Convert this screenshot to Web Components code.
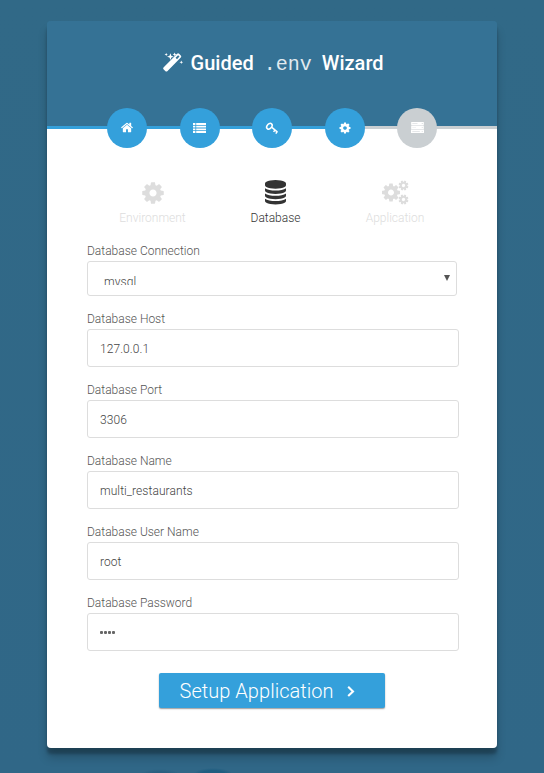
<!DOCTYPE html>
<html lang="en"><head><meta charset="utf-8"><title>Guided .env Wizard</title>
<style>
html,body{margin:0;height:773px;overflow:hidden}
body{font-family:Roboto,"Liberation Sans",sans-serif;font-weight:300;color:#555}
</style></head><body>
<wizard-page>
 <wizard-header slot="header"></wizard-header>
 <wizard-progress slot="header"></wizard-progress>
 <wizard-tabs>
  <wizard-tab icon="cog" style="width:67px">Environment</wizard-tab>
  <wizard-tab icon="database" active style="width:50px">Database</wizard-tab>
  <wizard-tab icon="cogs" style="width:60px">Application</wizard-tab>
 </wizard-tabs>
 <form-field label="Database Connection" select>mysql</form-field>
 <form-field label="Database Host">127.0.0.1</form-field>
 <form-field label="Database Port">3306</form-field>
 <form-field label="Database Name">multi_restaurants</form-field>
 <form-field label="Database User Name">root</form-field>
 <form-field label="Database Password" password></form-field>
 <wizard-button>Setup Application</wizard-button>
</wizard-page>
<script>
const COG='M1024 640q0-106-75-181t-181-75-181 75-75 181 75 181 181 75 181-75 75-181zm512-109v222q0 12-8 23t-20 13l-185 28q-19 54-39 91 35 50 107 138 10 12 10 25t-9 23q-27 37-99 108t-94 71q-12 0-26-9l-138-108q-44 23-91 38-16 136-29 186-7 28-36 28h-222q-14 0-24.5-8.5t-11.5-21.5l-28-184q-49-16-90-37l-141 107q-10 9-25 9-14 0-25-11-126-114-165-168-7-10-7-23 0-12 8-23 15-21 51-66.5t54-70.5q-27-50-41-99l-183-27q-13-2-21-12.5t-8-23.5v-222q0-12 8-23t19-13l186-28q14-46 39-92-40-57-107-138-10-12-10-24 0-10 9-23 26-36 98.5-107.5t94.5-71.5q13 0 26 10l138 107q44-23 91-38 16-136 29-186 7-28 36-28h222q14 0 24.5 8.5t11.5 21.5l28 184q49 16 90 37l142-107q9-9 24-9 13 0 25 10 129 119 165 170 7 8 7 22 0 12-8 23-15 21-51 66.5t-54 70.5q26 50 41 98l183 28q13 2 21 12.5t8 23.5z';
const cog=(x,y,s,r=0)=>`<path transform="translate(${x} ${y}) rotate(${r}) scale(${s/1536}) translate(-768 -640)" d="${COG}"/>`;
const ICONS={
 cog:[22,22,cog(11,11,21.5)],
 smallcog:[12,12,cog(6,6,11)],
 cogs:[27,25,cog(9,12.5,18)+cog(21.5,5.5,10,22)+cog(21.5,19.5,10,22)],
 database:[21,25,'<path transform="scale(.01367)" d="M768 768q237 0 443-43t325-127v170q0 69-103 128t-280 93.5-385 34.5-385-34.5-280-93.5-103-128v-170q119 84 325 127t443 43zm0 768q237 0 443-43t325-127v170q0 69-103 128t-280 93.5-385 34.5-385-34.5-280-93.5-103-128v-170q119 84 325 127t443 43zm0-384q237 0 443-43t325-127v170q0 69-103 128t-280 93.5-385 34.5-385-34.5-280-93.5-103-128v-170q119 84 325 127t443 43zm0-1152q208 0 385 34.5t280 93.5 103 128v128q0 69-103 128t-280 93.5-385 34.5-385-34.5-280-93.5-103-128v-128q0-69 103-128t280-93.5 385-34.5z"/>'],
 home:[12,12,'<path transform="translate(-.5 -1) scale(.00725)" d="M1472 992v480q0 26-19 45t-45 19h-384v-384h-256v384h-384q-26 0-45-19t-19-45v-480q0-1 .5-3t.5-3l575-474 575 474q1 2 1 6zm223-69l-62 74q-8 9-21 11h-3q-13 0-21-7l-692-577-692 577q-12 8-24 7-13-2-21-11l-62-74q-8-10-7-23.5t11-21.5l719-599q32-26 76-26t76 26l244 204v-195q0-14 9-23t23-9h192q14 0 23 9t9 23v408l219 182q10 8 11 21.5t-7 23.5z"/>'],
 list:[13,10,'<path d="M0 0h2.4v1.9H0zM0 2.7h2.4v1.9H0zM0 5.4h2.4v1.9H0zM0 8.1h2.4V10H0zM3.2 0H13v1.9H3.2zM3.2 2.7H13v1.9H3.2zM3.2 5.4H13v1.9H3.2zM3.2 8.1H13V10H3.2z"/>'],
 key:[12,12,'<g fill="none" stroke="currentColor"><ellipse cx="3.4" cy="4.2" rx="2.3" ry="3.2" transform="rotate(42 3.4 4.2)" stroke-width="1.5"/><path d="M5.6 5.2l5.6 4.6M7.6 9.9l1.6-2.2M9.8 11.6l1.6-2.2" stroke-width="1.5"/></g>'],
 server:[13,11,'<path fill-rule="evenodd" d="M.2 0h12.6v3.2H.2zM.2 3.8h12.6V7H.2zM0 7.6h13V11H0zM1.3 1.3v.4h5.2v-.4zM1.3 5.2v.4h3.7v-.4zM1.3 9.1v.4h7.5v-.4zM10.8 1.1v.8h.8v-.8zM10.8 4.9v.8h.8v-.8zM10.8 8.9v.8h.8v-.8z"/>'],
 magic:[20,20,'<path fill-rule="evenodd" d="M.5 15.6L14.1 1.8q1-1 2 0l1.7 1.7q1 1 0 2L4.3 19.2q-.9.8-1.8 0L.5 17.3q-.8-.8 0-1.7zM12.6 5.8l1.4 1.4 2.5-2.6L15.1 3.2zM3.2.8l.45 1.25 1.25.45-1.25.45-.45 1.25-.45-1.25-1.25-.45 1.25-.45zM7.4 1.3l.9 2.5 2.5.9-2.5.9-.9 2.5-.9-2.5L4 4.7l2.5-.9zM11.6.5l.55 1.35 1.35.55-1.35.55-.55 1.35-.55-1.35-1.35-.55 1.35-.55zM18.3 8.4l.5 1.3 1.3.5-1.3.5-.5 1.3-.5-1.3-1.3-.5 1.3-.5z"/>'],
 angle:[8,13,'<path d="M1.2 1.7L6 6.4 1.2 11.1" fill="none" stroke="currentColor" stroke-width="2.1"/>']
};
const define=(name,render)=>customElements.define(name,class extends HTMLElement{
 constructor(){super();this.attachShadow({mode:'open'});}
 connectedCallback(){this.shadowRoot.innerHTML=render(this);}
});
define('ui-icon',e=>{const[w,h,b]=ICONS[e.getAttribute('name')];return `<style>:host{display:inline-block;flex:none;width:${w}px;height:${h}px}svg{display:block;overflow:visible}</style><svg width="${w}" height="${h}" viewBox="0 0 ${w} ${h}" fill="currentColor">${b}</svg>`});
define('wizard-page',()=>`<style>
:host{display:block;box-sizing:border-box;height:773px;padding:21px 47px 25px;background:radial-gradient(ellipse 26px 8px at 213px 774px,#1f5d80 0 45%,transparent 75%),radial-gradient(ellipse 20px 6px at 160px 775px,#285f80 0 50%,transparent 100%),linear-gradient(#316987,#306787)}
.card{height:727px;border-radius:4px;background:linear-gradient(#357295 50px,#fff 50px);box-shadow:0 10px 10px rgba(0,0,0,.19),0 6px 3px rgba(0,0,0,.23)}
main{padding:32px 38px 0 40px;display:flex;flex-direction:column}
</style><div class="card"><slot name="header"></slot><main><slot></slot></main></div>`);
define('wizard-header',()=>`<style>
:host{display:flex;height:105px;box-sizing:border-box;padding:30px 0 0 116px;background:#357295;border-radius:4px 4px 0 0;color:#fff}
h1{margin:0;display:flex;font-size:20px;line-height:24px;font-weight:500}
.t{margin-left:7.5px;letter-spacing:.04px}code{font:300 20px/28px "Courier New","Liberation Mono",monospace;margin:0 10px;opacity:.85}
ui-icon{margin-top:1px}
</style><h1><ui-icon name="magic"></ui-icon><span class="t">Guided</span><code>.env</code><span>Wizard</span></h1>`);
define('wizard-progress',()=>`<style>
:host{display:flex;position:relative;gap:32.5px;height:40px;margin-top:-18px;padding-left:60px;background:linear-gradient(90deg,#34a0db 300px,#cacfd2 300px) 0 18px/100% 3px no-repeat}
span{width:40px;height:40px;border-radius:50%;background:#34a0db;color:#fff;display:flex;align-items:center;justify-content:center}
span:last-child{background:#cacfd2}
ui-icon{margin-top:-1px}
</style>${['home','list','key','smallcog','server'].map(n=>`<span><ui-icon name="${n}"></ui-icon></span>`).join('')}`);
define('wizard-tabs',()=>`<style>:host{display:flex;justify-content:space-between;height:63px;padding:0 34px 0 32px}</style><slot></slot>`);
define('wizard-tab',e=>`<style>
:host{display:flex;flex-direction:column;align-items:center;color:#ddd;font-size:12px;line-height:16px;white-space:nowrap}
:host([active]){color:#333}
.i{height:25px;margin-bottom:5px;display:flex;align-items:center}
</style><div class="i"><ui-icon name="${e.getAttribute('icon')}"></ui-icon></div><span><slot></slot></span>`);
define('form-field',e=>`<style>
:host{display:block;margin-bottom:15px;font-size:12px;line-height:14px}
.l{display:block;height:17px;padding-top:1px}
.b{box-sizing:border-box;height:38px;border:1px solid #ddd;border-radius:3px;padding:12px 12px 0;display:flex;color:#444;font-weight:300;letter-spacing:.07px}
.b.s{height:35px;width:370px;padding:13px 6px 0 16px;justify-content:space-between}
.v{height:16px}.s .v{height:10px;overflow:hidden}
.a{width:0;height:0;border:3px solid transparent;border-top:6px solid #555;border-bottom:0}
.d{display:flex;gap:1px;padding-top:5px}.d i{width:3px;height:3px;border-radius:1px;background:#666}
</style><span class="l">${e.getAttribute('label')}</span><div class="b ${e.hasAttribute('select')?'s':''}">${e.hasAttribute('password')?'<span class="d"><i></i><i></i><i></i><i></i></span>':'<span class="v"><slot></slot></span>'}${e.hasAttribute('select')?'<span class="a"></span>':''}</div>`);
define('wizard-button',()=>`<style>
:host{display:flex;box-sizing:border-box;width:226px;height:35px;margin:7px 0 0 72px;padding-left:20.5px;align-items:center;background:#34a0db;border-radius:2px;color:#fff;font-size:20px;letter-spacing:.04px;box-shadow:0 1px 1.5px rgba(0,0,0,.4);white-space:nowrap}
ui-icon{margin:2px 0 0 13.5px}
</style><slot></slot><ui-icon name="angle"></ui-icon>`);
</script></body></html>
